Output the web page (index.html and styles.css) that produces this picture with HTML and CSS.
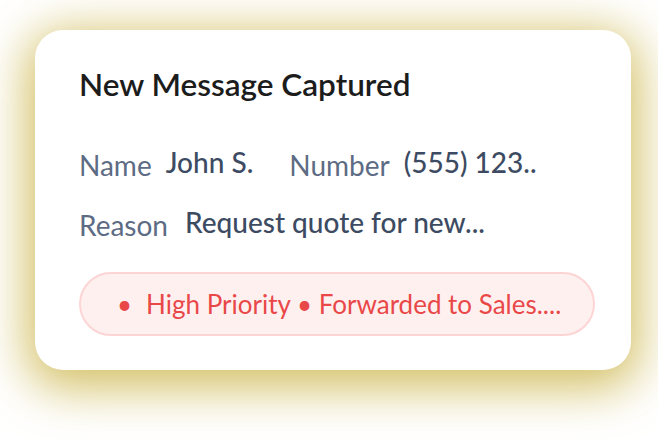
FILE: index.html
```html
<!DOCTYPE html>
<html lang="en">
<head>
  <meta charset="UTF-8" />
  <title>New Message Captured</title>
  <link rel="stylesheet" href="styles.css">
</head>
<body>
  <div class="card">
    <h1 class="title">New Message Captured</h1>
    <div class="row">
      <span class="label">Name</span>
      <span class="value name">John S.</span>
      <span class="label">Number</span>
      <span class="value">(555) 123..</span>
    </div>
    <div class="row">
      <span class="label reason">Reason</span>
      <span class="value">Request quote for new...</span>
    </div>
    <div class="pill">
      <span class="dot">•</span>
      <span>High Priority • Forwarded to Sales....</span>
    </div>
  </div>
</body>
</html>
```

FILE: styles.css
```css
body {
  margin: 0;
  background: #fff;
  font-family: Lato, "Open Sans", sans-serif;
  width: 658px;
  height: 442px;
  overflow: hidden;
}

.card {
  margin: 30px 0 0 35px;
  width: 596px;
  height: 340px;
  box-sizing: border-box;
  padding: 0 36px 0 44px;
  background: #fff;
  border-radius: 28px;
  box-shadow: 0 10px 48px 8px rgba(200, 175, 60, 0.8);
  overflow: hidden;
}

.title {
  margin: 34px 0 0;
  font-size: 31.5px;
  font-weight: 600;
  line-height: 40px;
  color: #1c1c1c;
}

.row {
  display: flex;
  align-items: baseline;
  font-size: 28px;
  line-height: 34px;
}

.title + .row {
  margin-top: 44px;
}

.row + .row {
  margin-top: 26px;
}

.label {
  color: #5d6b84;
  margin-right: 14px;
}

.reason {
  margin-right: 17px;
}

.value {
  color: #3d4b62;
  font-weight: 500;
  position: relative;
  top: -3px;
}

.name {
  margin-right: 36px;
}

.pill {
  display: flex;
  align-items: center;
  height: 64px;
  margin-top: 30px;
  box-sizing: border-box;
  border: 2px solid #fdd4d4;
  border-radius: 32px;
  background: #fff0f0;
  color: #e94848;
  font-size: 26px;
  padding-left: 36px;
}

.dot {
  margin-right: 14px;
}
```
